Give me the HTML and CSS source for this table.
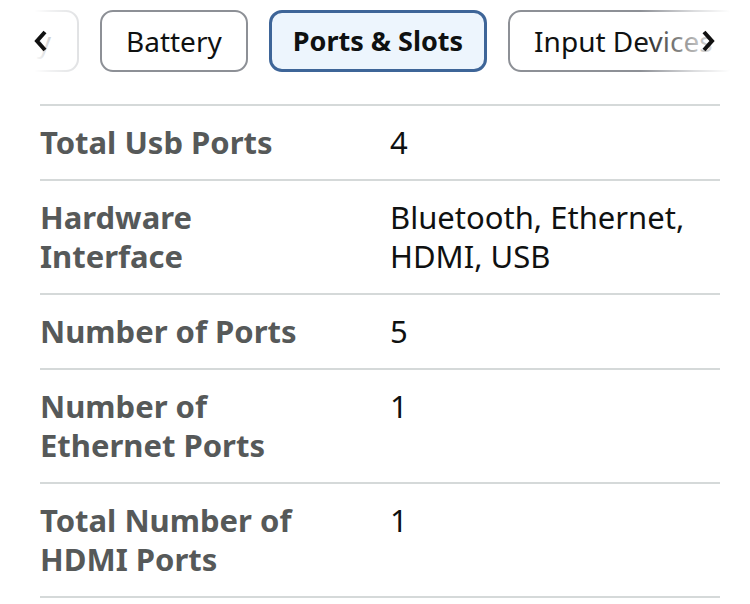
FILE: index.html
```html
<!DOCTYPE html>
<html>
<head>
<meta charset="utf-8">
<link rel="stylesheet" href="styles.css">
</head>
<body>
<div class="tabs-wrap">
  <div class="tabs">
    <div class="tab tab-partial"><span>Memory</span></div>
    <div class="tab">Battery</div>
    <div class="tab tab-active">Ports &amp; Slots</div>
    <div class="tab">Input Devices</div>
  </div>
  <div class="fade fade-left"></div>
  <div class="fade fade-right"></div>
  <svg class="chev chev-left" width="16" height="24" viewBox="0 0 16 24"><path d="M12 3 L4 12 L12 21" fill="none" stroke="#111" stroke-width="4" stroke-linejoin="miter"/></svg>
  <svg class="chev chev-right" width="16" height="24" viewBox="0 0 16 24"><path d="M4 3 L12 12 L4 21" fill="none" stroke="#111" stroke-width="4" stroke-linejoin="miter"/></svg>
</div>
<div class="table">
  <div class="row"><div class="label">Total Usb Ports</div><div class="value">4</div></div>
  <div class="row"><div class="label">Hardware Interface</div><div class="value">Bluetooth, Ethernet, HDMI, USB</div></div>
  <div class="row"><div class="label">Number of Ports</div><div class="value">5</div></div>
  <div class="row"><div class="label">Number of Ethernet Ports</div><div class="value">1</div></div>
  <div class="row"><div class="label">Total Number of HDMI Ports</div><div class="value">1</div></div>
</div>
</body>
</html>
```
FILE: styles.css
```css
* { box-sizing: border-box; }
html, body { margin: 0; padding: 0; background: #fff; }
body { font-family: "Noto Sans", "Open Sans", sans-serif; color: #0f1111; width: 750px; height: 604px; overflow: hidden; }

.tabs-wrap { position: relative; height: 104px; overflow: hidden; }
.tabs { display: flex; gap: 21px; padding: 10px 0 0 0; margin-left: -61px; white-space: nowrap; }
.tab {
  flex: none;
  height: 62px;
  border: 2px solid #8d9096;
  border-radius: 13px;
  padding: 0 24px;
  font-size: 28px;
  line-height: 58px;
  color: #0f1111;
  background: #fff;
}
.tab-partial { width: 140px; overflow: hidden; display: flex; justify-content: flex-end; padding-right: 26px; border-color: #b9bcc0; }
.tab-partial span { flex: none; }
.tab-active {
  border: 3px solid #3e6598;
  background: #edf5fd;
  font-weight: 700;
  font-size: 27px;
  line-height: 56px;
  padding: 0 21px;
}
.fade { position: absolute; top: 0; height: 90px; }
.fade-left { left: 0; width: 82px; background: linear-gradient(to right, #fff 0%, #fff 42%, rgba(255,255,255,0.8) 62%, rgba(255,255,255,0.55) 100%); }
.fade-right { left: 640px; width: 110px; background: linear-gradient(to right, rgba(255,255,255,0) 0%, rgba(255,255,255,0.7) 50%, #fff 82%); }
.chev { position: absolute; top: 29px; }
.chev-left { left: 33px; }
.chev-right { left: 700px; }

.table { margin: 0 30px 0 40px; border-top: 2px solid #d5d9d9; }
.row { display: flex; padding: 17px 0; border-bottom: 2px solid #d5d9d9; font-size: 31px; line-height: 39px; }
.label { width: 350px; flex: none; font-weight: 700; color: #565959; padding-right: 68px; }
.value { flex: 1; color: #0f1111; }
```
